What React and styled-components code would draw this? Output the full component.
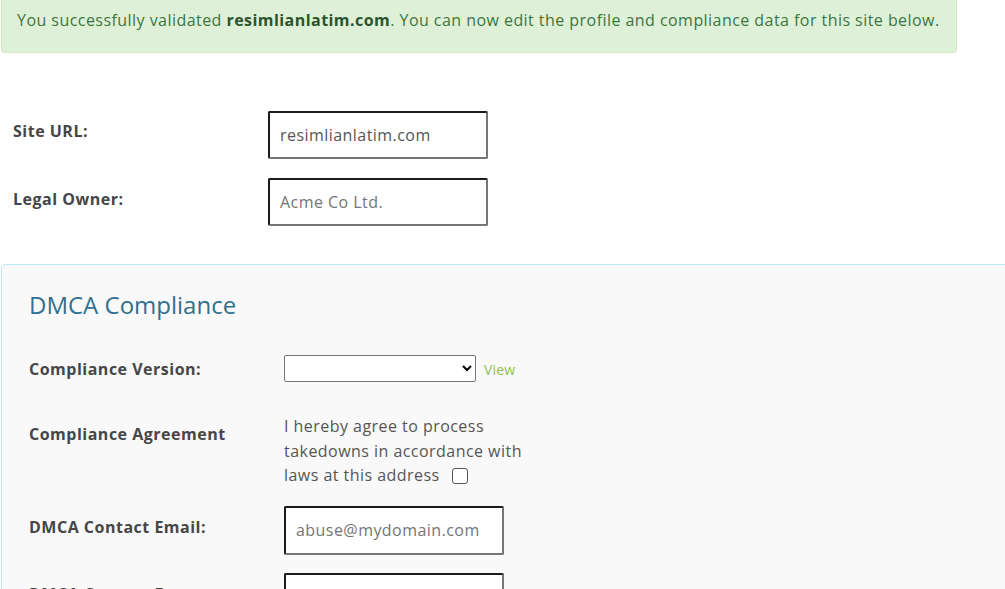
import React from 'react'
import styled, { createGlobalStyle } from 'styled-components'

const GlobalStyle = createGlobalStyle`
  html, body {
    margin: 0;
    padding: 0;
    overflow: hidden;
    background: #fff;
  }
  body {
    font-family: "Open Sans", "Liberation Sans", sans-serif;
    font-size: 16px;
    color: #555;
  }
`

const Page = styled.div`
  padding-left: 1px;
  width: 1060px;
`

const Alert = styled.div`
  width: 956px;
  box-sizing: border-box;
  padding: 9px 0 21px 15px;
  line-height: 22px;
  white-space: nowrap;
  background: #dff0d8;
  border: 1px solid #d6e9c6;
  border-top: none;
  border-radius: 0 0 4px 4px;
  color: #3c763d;
  font-size: 16px;
  letter-spacing: 0.45px;

  b {
    color: #2b542c;
    font-weight: 700;
  }
`

const TopForm = styled.div`
  padding: 58px 0 0 12px;
  margin-bottom: 38px;
`

const Row = styled.div`
  display: grid;
  grid-template-columns: 255px auto;
  align-items: start;
  margin-bottom: ${({ $gap }) => $gap ?? 20}px;
`

const Label = styled.label`
  font-weight: 700;
  color: #464646;
  line-height: 22px;
  letter-spacing: 0.5px;
  padding-top: ${({ $pt }) => $pt ?? 10}px;
`

const TextInput = styled.input`
  box-sizing: border-box;
  width: 220px;
  height: ${({ $h }) => $h ?? 48}px;
  padding: 0 10px;
  font-family: inherit;
  font-size: 16px;
  letter-spacing: 0.45px;
  color: #555;
  background: #fff;
  border: 2px solid;
  border-color: #1b1b1b #767676 #767676 #1b1b1b;
  border-radius: 2px;
  outline: none;

  &::placeholder {
    color: #757575;
  }
`

const Panel = styled.section`
  border: 1px solid #bce8f1;
  border-radius: 4px 0 0 0;
  background: #f9f9f9;
  padding: 26px 0 0 27px;
  height: 400px;
`

const Heading = styled.h2`
  margin: 0 0 36px;
  font-size: 24px;
  font-weight: 400;
  line-height: 28px;
  color: #31708f;
`

const SelectWrap = styled.div`
  display: flex;
  align-items: center;
  gap: 8px;
`

const Select = styled.select`
  width: 192px;
  height: 27px;
  background: #fff;
  border: 1px solid #767676;
  border-radius: 2px;
  font-family: inherit;
  font-size: 14px;
`

const ViewLink = styled.a`
  color: #8cc152;
  font-size: 14px;
  letter-spacing: 0.2px;
  text-decoration: none;
  padding-top: 1px;
`

const Agreement = styled.div`
  max-width: 250px;
  line-height: 24.5px;
  color: #555;
  font-size: 16px;
  letter-spacing: 0.46px;
`

const Check = styled.input`
  appearance: none;
  width: 16px;
  height: 16px;
  margin: 0 0 0 12px;
  vertical-align: -3px;
  border: 1px solid #555;
  border-radius: 3px;
  background: #fff;
`

export default function App() {
  return (
    <Page>
      <GlobalStyle />
      <Alert>
        You successfully validated <b>resimlianlatim.com</b>. You can now edit the profile and compliance data for this site below.
      </Alert>

      <TopForm>
        <Row $gap={19}>
          <Label $pt={9}>Site URL:</Label>
          <TextInput $h={48} defaultValue="resimlianlatim.com" />
        </Row>
        <Row $gap={0}>
          <Label>Legal Owner:</Label>
          <TextInput $h={48} placeholder="Acme Co Ltd." />
        </Row>
      </TopForm>

      <Panel>
        <Heading>DMCA Compliance</Heading>
        <Row $gap={32}>
          <Label $pt={3}>Compliance Version:</Label>
          <SelectWrap>
            <Select defaultValue="">
              <option value=""></option>
            </Select>
            <ViewLink href="#">View</ViewLink>
          </SelectWrap>
        </Row>
        <Row $gap={18}>
          <Label $pt={9}>Compliance Agreement</Label>
          <Agreement>
            I hereby agree to process takedowns in accordance with laws at this address
            <Check type="checkbox" />
          </Agreement>
        </Row>
        <Row $gap={18}>
          <Label>DMCA Contact Email:</Label>
          <TextInput $h={49} placeholder="abuse@mydomain.com" />
        </Row>
        <Row>
          <Label>DMCA Contact Fax:</Label>
          <TextInput $h={49} />
        </Row>
      </Panel>
    </Page>
  )
}
